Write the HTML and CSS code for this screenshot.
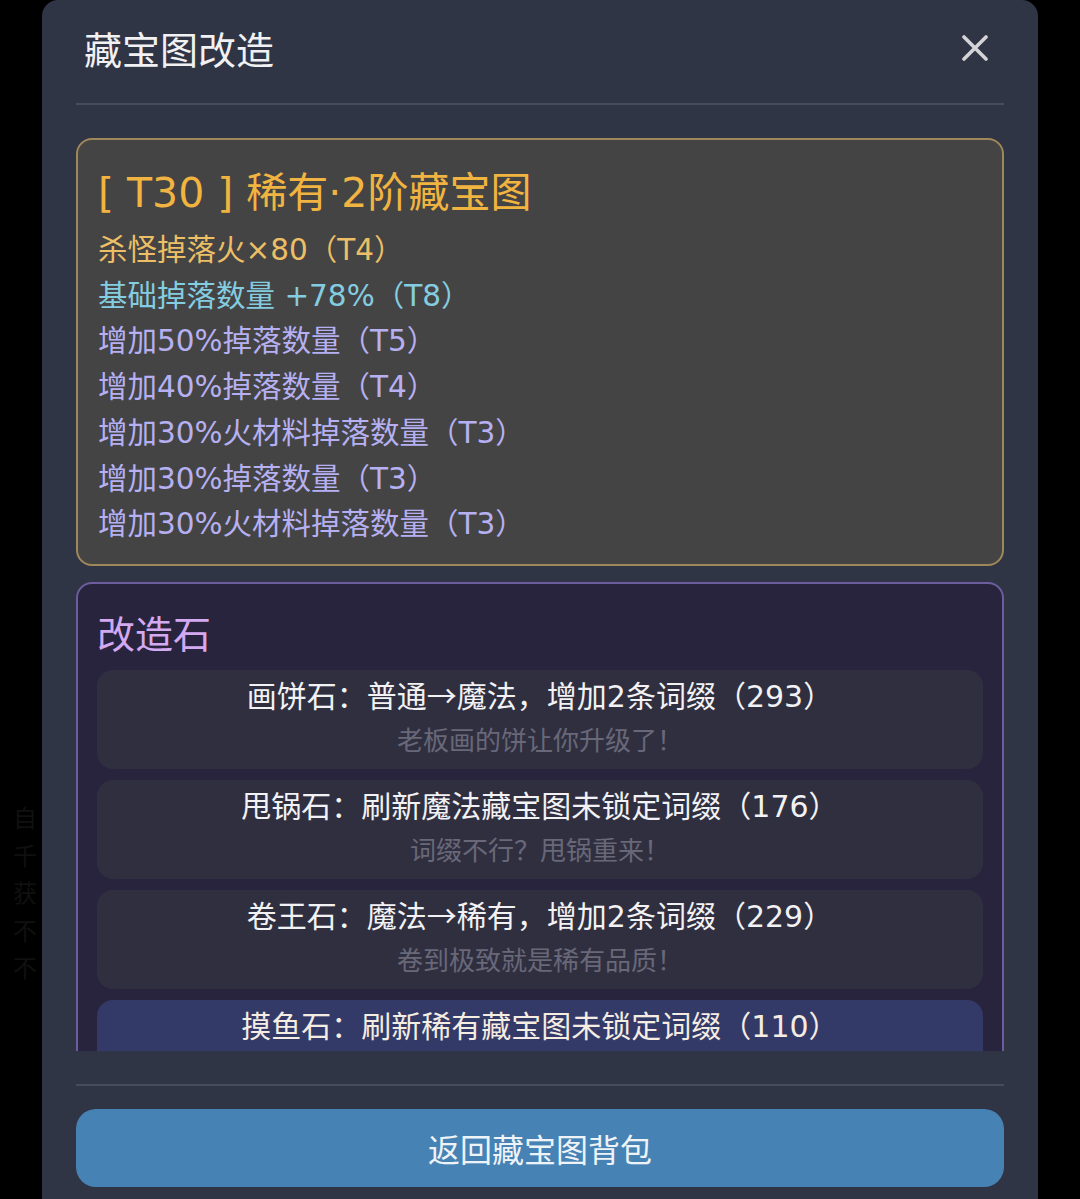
FILE: index.html
```html
<!DOCTYPE html>
<html lang="zh-CN">
<head>
<meta charset="utf-8">
<title>藏宝图改造</title>
<link rel="stylesheet" href="styles.css">
</head>
<body>
<div class="backdrop">
  <div class="ghost-text">
    <span>自</span><span>千</span><span>获</span><span>不</span><span>不</span>
  </div>
</div>
<div class="modal">
  <header class="modal-header">
    <h1 class="modal-title">藏宝图改造</h1>
    <button class="close-btn" aria-label="关闭">
      <svg viewBox="0 0 26 26" width="26" height="26">
        <path d="M2 2 L24 24 M24 2 L2 24" stroke="#d4d4d6" stroke-width="3.6" stroke-linecap="round" fill="none"/>
      </svg>
    </button>
  </header>
  <div class="divider"></div>
  <div class="modal-body">
    <section class="map-card">
      <div class="map-title">[ T30 ] 稀有·2阶藏宝图</div>
      <div class="affix gold">杀怪掉落火×80（T4）</div>
      <div class="affix cyan">基础掉落数量 +78%（T8）</div>
      <div class="affix lav">增加50%掉落数量（T5）</div>
      <div class="affix lav">增加40%掉落数量（T4）</div>
      <div class="affix lav">增加30%火材料掉落数量（T3）</div>
      <div class="affix lav">增加30%掉落数量（T3）</div>
      <div class="affix lav">增加30%火材料掉落数量（T3）</div>
    </section>
    <section class="stone-card">
      <div class="stone-title">改造石</div>
      <div class="stone-list">
        <div class="stone">
          <div class="stone-main">画饼石：普通<span class="arrow">→</span>魔法，增加2条词缀（293）</div>
          <div class="stone-sub">老板画的饼让你升级了！</div>
        </div>
        <div class="stone">
          <div class="stone-main">甩锅石：刷新魔法藏宝图未锁定词缀（176）</div>
          <div class="stone-sub">词缀不行？甩锅重来！</div>
        </div>
        <div class="stone">
          <div class="stone-main">卷王石：魔法<span class="arrow">→</span>稀有，增加2条词缀（229）</div>
          <div class="stone-sub">卷到极致就是稀有品质！</div>
        </div>
        <div class="stone active">
          <div class="stone-main">摸鱼石：刷新稀有藏宝图未锁定词缀（110）</div>
        </div>
      </div>
    </section>
  </div>
  <div class="divider footer-divider"></div>
  <div class="modal-footer">
    <button class="back-btn">返回藏宝图背包</button>
  </div>
</div>
</body>
</html>
```
FILE: styles.css
```css
html, body {
  margin: 0;
  padding: 0;
  height: 1199px;
  overflow: hidden;
  background: #000;
  font-family: "DejaVu Sans", "Noto Sans CJK SC", sans-serif;
}

.backdrop {
  position: absolute;
  inset: 0;
  background: #000;
}

.ghost-text {
  position: absolute;
  left: 13px;
  top: 798px;
  display: flex;
  flex-direction: column;
  color: #101010;
  font-family: "Noto Sans CJK SC", sans-serif;
  font-size: 24px;
  line-height: 37.5px;
}

.modal {
  position: relative;
  margin-left: 42px;
  width: 996px;
  height: 1230px;
  background: #303545;
  border-radius: 16px 16px 0 0;
  display: flex;
  flex-direction: column;
}

.modal-header {
  display: flex;
  align-items: center;
  justify-content: space-between;
  padding: 18px 43px 0 42px;
  height: 60px;
}

.modal-title {
  margin: 0;
  font-family: "Noto Sans CJK SC", sans-serif;
  font-size: 38px;
  font-weight: 400;
  line-height: 60px;
  color: #f1f1f3;
}

.close-btn {
  background: none;
  border: none;
  padding: 0;
  width: 40px;
  height: 40px;
  display: flex;
  align-items: center;
  justify-content: center;
}

.divider {
  height: 2px;
  margin: 25px 34px 0;
  background: #464c5e;
}

.modal-body {
  height: 913px;
  padding: 33px 34px 0;
  overflow: hidden;
  display: flex;
  flex-direction: column;
  gap: 16px;
}

.map-card {
  flex: none;
  background: #444444;
  border: 2px solid #9e8859;
  border-radius: 16px;
  padding: 25px 19px 16px 20px;
}

.map-title {
  font-size: 41px;
  line-height: 56px;
  color: #f2b440;
  margin-bottom: 7px;
}

.affix {
  font-size: 29.5px;
  line-height: 45.7px;
}

.affix.gold { color: #ecbf66; }
.affix.cyan { color: #84cde0; }
.affix.lav { color: #b6b0f2; }

.stone-card {
  flex: none;
  background: #29243d;
  border: 2px solid #6d5d9f;
  border-radius: 16px;
  padding: 23px 19px 20px;
}

.stone-title {
  font-family: "Noto Sans CJK SC", sans-serif;
  font-size: 38px;
  line-height: 50px;
  color: #d3a9f2;
}

.stone-list {
  margin-top: 13px;
  display: flex;
  flex-direction: column;
  gap: 11px;
}

.stone {
  background: #302f40;
  border-radius: 16px;
  padding: 7px 10px 10px;
  text-align: center;
}

.stone.active {
  background: #343a68;
  padding-bottom: 52px;
}

.stone-main {
  height: 40px;
  font-size: 30px;
  line-height: 40px;
  color: #f2f2f4;
}

.arrow {
  font-family: "Noto Sans CJK SC", sans-serif;
  line-height: 1;
}

.stone.active .stone-main {
  color: #f5ece2;
}

.stone-sub {
  margin-top: 6px;
  font-size: 26px;
  line-height: 36px;
  color: #686879;
}

.footer-divider {
  margin-top: 33px;
}

.modal-footer {
  padding: 23px 34px 0;
}

.back-btn {
  display: block;
  width: 100%;
  height: 78px;
  border: none;
  border-radius: 20px;
  background: #4682b4;
  color: #eef3f8;
  font-family: "Noto Sans CJK SC", sans-serif;
  font-size: 32px;
  line-height: 78px;
  padding: 0;
}
```
